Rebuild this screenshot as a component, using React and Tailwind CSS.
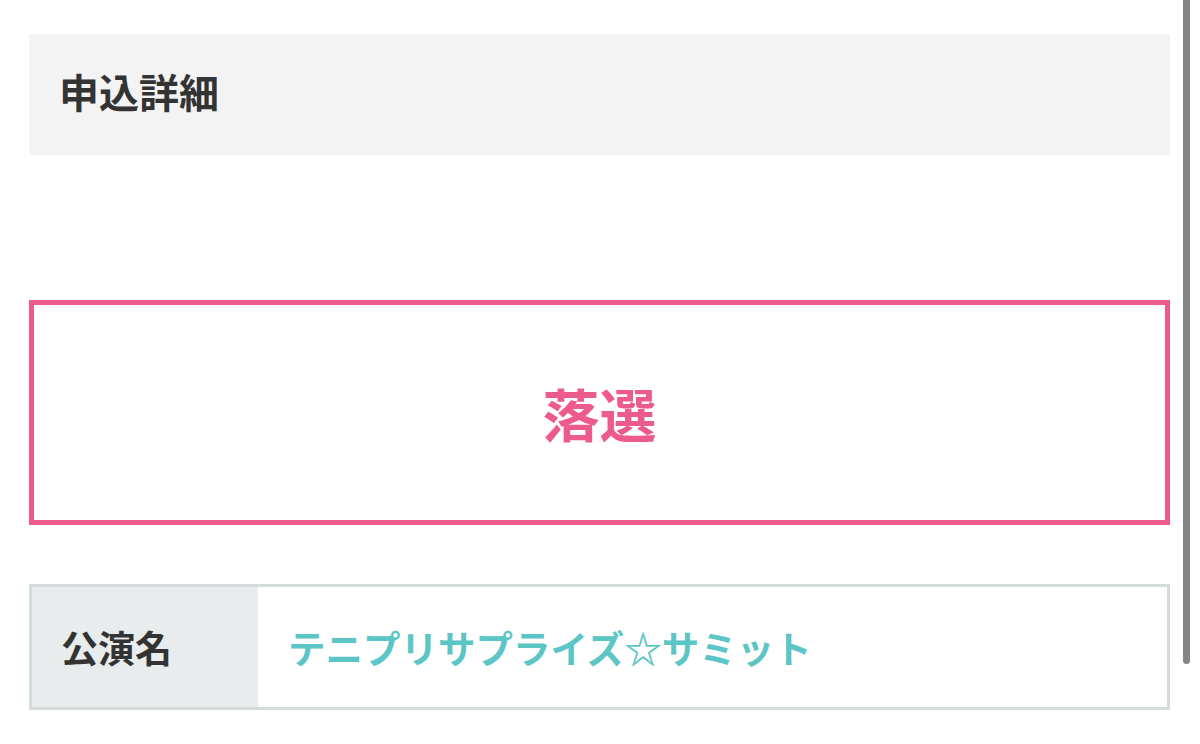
import React from 'react';

export default function App() {
  return (
    <div
      className="relative min-h-[744px] bg-white pl-[29px] pr-[30px] pt-[34px]"
      style={{ fontFamily: '"Noto Sans CJK JP", "Noto Sans", sans-serif' }}
    >
      {/* header */}
      <div className="flex h-[121px] items-center rounded-[2px] bg-[#f3f3f3] pb-[8px] pl-[30px]">
        <h1 className="text-[40px] font-bold leading-none text-[#333333]">申込詳細</h1>
      </div>

      {/* result */}
      <div className="mt-[145px] flex h-[225px] items-center justify-center border-[5px] border-[#ec5b8b]">
        <div className="text-[57px] font-bold leading-none text-[#ec5b8b]">落選</div>
      </div>

      {/* detail table */}
      <div className="mt-[59px] flex h-[126px] border-[3px] border-[#d3dbdb]">
        <div className="flex w-[226px] items-center bg-[#e8ecec] pl-[29px]">
          <span className="text-[37px] font-bold leading-none text-[#333333]">公演名</span>
        </div>
        <div className="flex flex-1 items-center bg-white pl-[30px]">
          <span className="text-[37.5px] font-bold leading-none text-[#5cc5c6]">テニプリサプライズ☆サミット</span>
        </div>
      </div>

      {/* scrollbar */}
      <div className="absolute right-[10px] top-0 h-[664px] w-[7px] rounded-b-full bg-[#858585]" />
    </div>
  );
}
